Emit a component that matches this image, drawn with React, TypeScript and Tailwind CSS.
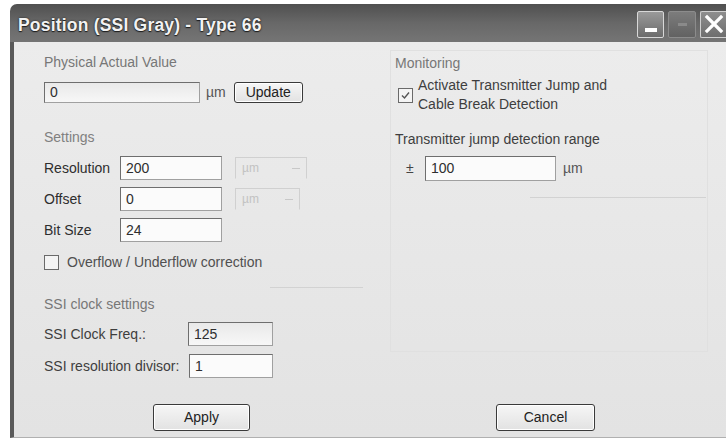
import React from "react";

const font = { fontFamily: '"Liberation Sans", Arial, sans-serif' };

function Field({ value, width, shaded }: { value: string; width: string; shaded?: boolean }) {
  return (
    <div
      className={`${width} h-full flex items-center pl-[5px] text-[#2e2e2e] border border-[#a0a0a0] border-t-[#6e6e6e] border-l-[#6e6e6e] ${
        shaded ? "bg-gradient-to-b from-[#e9e9e9] to-[#f7f7f7]" : "bg-[#fbfbfb]"
      }`}
    >
      {value}
    </div>
  );
}

function DisabledCombo({ width }: { width: string }) {
  return (
    <div className={`${width} h-full flex items-center justify-between px-[6px] border border-[#d0d0d0] border-b-transparent text-[#c2c2c2] text-[12px]`}>
      <span>µm</span>
      <span className="w-[8px] h-px bg-[#c8c8c8]" />
    </div>
  );
}

function Button({ label, className }: { label: string; className: string }) {
  return (
    <div
      className={`${className} flex items-center justify-center rounded-[3px] border border-[#3a3a3a] bg-gradient-to-b from-[#f6f6f6] to-[#e2e2e2] shadow-[inset_0_0_0_1px_#ffffff] text-[#222]`}
    >
      {label}
    </div>
  );
}

function Check({ checked }: { checked?: boolean }) {
  return (
    <div className="w-[15px] h-[15px] shrink-0 border border-[#6a6a6a] bg-[#f4f4f4] flex items-center justify-center">
      {checked && (
        <svg width="11" height="11" viewBox="0 0 11 11">
          <path d="M2 5.5 L4.5 8 L9 2.5" fill="none" stroke="#555" strokeWidth="1.4" />
        </svg>
      )}
    </div>
  );
}

function TitleButtons() {
  return (
    <div className="flex items-center gap-[4px] h-full pt-[2px]">
      <div className="w-[27px] h-[27px] rounded-[2px] border border-[#d8d8d8] bg-gradient-to-b from-[#9a9a9a] to-[#6c6c6c] flex items-end justify-center pb-[5px]">
        <span className="w-[12px] h-[4px] bg-white" />
      </div>
      <div className="w-[28px] h-[27px] rounded-[2px] border border-[#8c8c8c] bg-gradient-to-b from-[#7c7c7c] to-[#626262] flex items-center justify-center">
        <span className="w-[9px] h-[3px] bg-[#8a8a8a]" />
      </div>
      <div className="w-[26px] h-[27px] rounded-l-[2px] border border-r-0 border-[#d0d0d0] bg-gradient-to-b from-[#8e8e8e] to-[#6e6e6e] flex items-center justify-center">
        <svg width="20" height="20" viewBox="0 0 20 20">
          <path d="M3 3 L17 17 M17 3 L3 17" stroke="#ffffff" strokeWidth="3.2" strokeLinecap="square" />
        </svg>
      </div>
    </div>
  );
}

export default function App() {
  return (
    <div className="w-[726px] h-[443px] bg-white overflow-hidden text-[14px]" style={font}>
      <div className="ml-[10px] mt-[4px] w-[716px] h-[434px] flex flex-col">
        {/* title bar */}
        <div className="h-[38px] shrink-0 rounded-tl-[7px] bg-gradient-to-b from-[#505050] via-[#686868] to-[#757575] flex items-center justify-between pl-[8px]">
          <span className="pt-[4px] text-[17.5px] font-bold text-[#f2f2f2] [text-shadow:0_0_2px_#1e1e1e,0_1px_1px_#1e1e1e] tracking-[0.2px]">
            Position (SSI Gray) - Type 66
          </span>
          <TitleButtons />
        </div>

        {/* client area */}
        <div className="flex-1 flex border-l-4 border-[#5a5a5a] border-b border-b-[#b0b0b0] bg-gradient-to-b from-[#ececec] to-[#e3e3e3]">
          {/* left column */}
          <div className="w-[349px] shrink-0 pl-[30px] pt-[12px] flex flex-col">
            <div className="leading-4 text-[#777]">Physical Actual Value</div>
            <div className="mt-[12px] h-[21px] flex items-center">
              <Field value="0" width="w-[156px]" shaded />
              <span className="ml-[6px] text-[#555]">µm</span>
              <Button label="Update" className="ml-[8px] w-[69px] h-[21px]" />
            </div>

            <div className="mt-[26px] leading-4 text-[#808080]">Settings</div>
            <div className="mt-[11px] h-[24px] flex items-center">
              <span className="w-[76px] text-[#2e2e2e]">Resolution</span>
              <Field value="200" width="w-[102px]" />
              <div className="ml-[13px] h-[22px] flex">
                <DisabledCombo width="w-[72px]" />
              </div>
            </div>
            <div className="mt-[7px] h-[24px] flex items-center">
              <span className="w-[76px] text-[#2e2e2e]">Offset</span>
              <Field value="0" width="w-[102px]" />
              <div className="ml-[13px] h-[22px] flex">
                <DisabledCombo width="w-[65px]" />
              </div>
            </div>
            <div className="mt-[7px] h-[24px] flex items-center">
              <span className="w-[76px] text-[#2e2e2e]">Bit Size</span>
              <Field value="24" width="w-[102px]" />
            </div>
            <div className="mt-[12px] h-[16px] flex items-center">
              <Check />
              <span className="ml-[8px] text-[#505050]">Overflow / Underflow correction</span>
            </div>
            <div className="mt-[17px] ml-[226px] w-[93px] h-px bg-[#d2d2d2]" />

            <div className="mt-[8px] leading-4 text-[#777]">SSI clock settings</div>
            <div className="mt-[10px] h-[24px] flex items-center">
              <span className="w-[144px] text-[#3e3e3e]">SSI Clock Freq.:</span>
              <Field value="125" width="w-[85px]" shaded />
            </div>
            <div className="mt-[8px] h-[24px] flex items-center">
              <span className="w-[145px] text-[#3e3e3e]">SSI resolution divisor:</span>
              <Field value="1" width="w-[84px]" />
            </div>

            <Button label="Apply" className="mt-[26px] ml-[109px] w-[97px] h-[27px]" />
          </div>

          {/* right column */}
          <div className="flex-1 pt-[8px] flex flex-col">
            <div className="ml-[27px] w-[318px] h-[302px] border border-[#e0e0e0] pl-[4px] pt-[4px] flex flex-col">
              <div className="leading-4 text-[#777]">Monitoring</div>
              <div className="mt-[5px] flex items-center">
                <div className="ml-[3px]">
                  <Check checked />
                </div>
                <div className="ml-[5px] leading-[19px] text-[#3e3e3e]">
                  Activate Transmitter Jump and
                  <br />
                  Cable Break Detection
                </div>
              </div>
              <div className="mt-[17px] leading-4 text-[#3e3e3e]">Transmitter jump detection range</div>
              <div className="mt-[9px] h-[25px] flex items-center">
                <span className="ml-[11px] w-[8px] text-[#444]">±</span>
                <div className="ml-[11px] h-full flex">
                  <Field value="100" width="w-[131px]" />
                </div>
                <span className="ml-[7px] text-[#555]">µm</span>
              </div>
              <div className="mt-[16px] ml-[135px] w-[176px] h-px bg-[#d2d2d2]" />
            </div>
            <Button label="Cancel" className="mt-[52px] ml-[133px] w-[99px] h-[27px]" />
          </div>
        </div>
      </div>
    </div>
  );
}
